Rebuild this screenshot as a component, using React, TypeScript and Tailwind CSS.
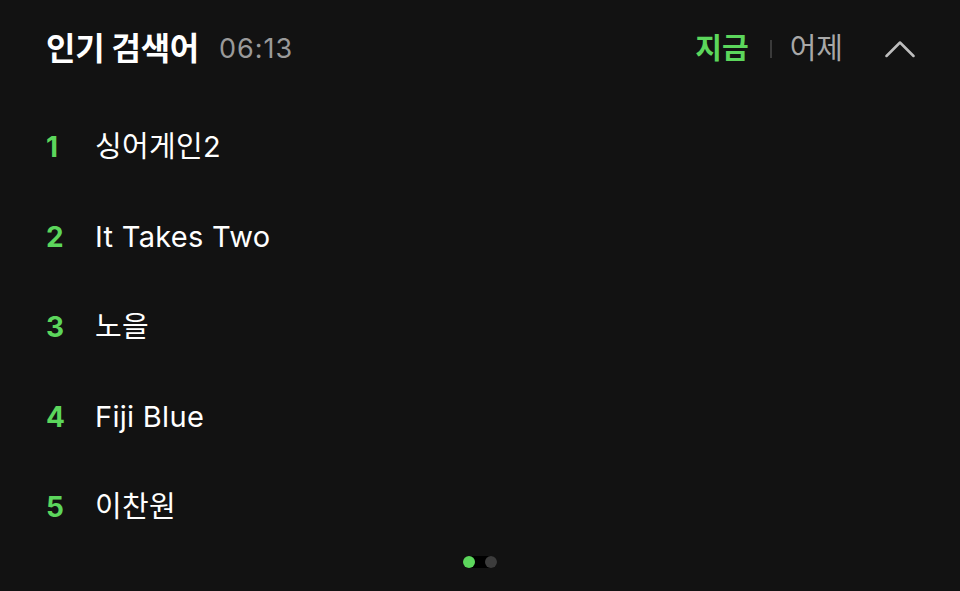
const keywords = ['싱어게인2', 'It Takes Two', '노을', 'Fiji Blue', '이찬원']

const font = { fontFamily: 'Inter, "Noto Sans CJK KR", sans-serif' }

export default function App() {
  return (
    <div className="w-[960px] h-[591px] bg-[#121212] text-white overflow-hidden" style={font}>
      <div className="h-[98px] flex items-center pl-[46px] pr-[45px]">
        <span className="text-[32px] font-bold tracking-[-0.3px]">인기 검색어</span>
        <span className="ml-[20px] text-[27px] tracking-[1px] text-[#9a9a9a]">06:13</span>
        <div className="ml-auto flex items-center">
          <button type="button" className="text-[29px] font-bold text-[#5cd65c]">
            지금
          </button>
          <span className="ml-[21px] w-[2px] h-[18px] bg-[#3a3a3a]" />
          <button type="button" className="ml-[18px] text-[29px] text-[#a8a8a8]">
            어제
          </button>
          <svg className="ml-[42px]" width="30" height="18" viewBox="0 0 30 18" fill="none">
            <polyline
              points="1.5,16 15,2.5 28.5,16"
              stroke="#bdbdbd"
              strokeWidth="2.5"
              strokeLinecap="round"
              strokeLinejoin="round"
            />
          </svg>
        </div>
      </div>
      <ul className="mt-[4px] pl-[46px]">
        {keywords.map((word, i) => (
          <li key={word} className="h-[90px] flex items-center">
            <span className="w-[49px] text-[28px] font-bold text-[#5cd65c]">{i + 1}</span>
            <span className="text-[29px] tracking-[0.3px]">{word}</span>
          </li>
        ))}
      </ul>
      <div className="mt-[4px] flex justify-center">
        <div className="w-[34px] h-[12px] rounded-full bg-black flex justify-between">
          <span className="size-[12px] rounded-full bg-[#5cd65c]" />
          <span className="size-[12px] rounded-full bg-[#3c3c3c]" />
        </div>
      </div>
    </div>
  )
}
